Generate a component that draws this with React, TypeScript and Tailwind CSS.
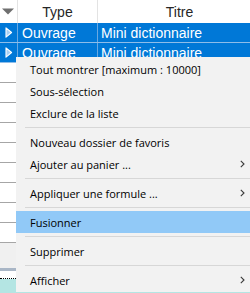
import React from "react";

type Item = { label?: string; sep?: boolean; sub?: boolean; active?: boolean };

const items: Item[] = [
  { label: "Tout montrer [maximum : 10000]" },
  { label: "Sous-sélection" },
  { label: "Exclure de la liste" },
  { sep: true },
  { label: "Nouveau dossier de favoris" },
  { label: "Ajouter au panier ...", sub: true },
  { sep: true },
  { label: "Appliquer une formule ...", sub: true },
  { sep: true },
  { label: "Fusionner", active: true },
  { sep: true },
  { label: "Supprimer" },
  { sep: true },
  { label: "Afficher", sub: true },
];

function Chevron() {
  return (
    <svg width="5" height="8" viewBox="0 0 5 8" className="shrink-0">
      <path d="M0.8 0.8 L4 4 L0.8 7.2" fill="none" stroke="#3a3a3a" strokeWidth="1.1" />
    </svg>
  );
}

function RowArrow() {
  return (
    <svg width="8" height="11" viewBox="0 0 8 11">
      <path d="M1 0.8 L1 10.2 L6.6 5.5 Z" fill="#a9d0f3" stroke="#ffffff" strokeWidth="1.1" strokeLinejoin="round" />
    </svg>
  );
}

function BlueRow() {
  return (
    <div className="flex h-[20px] bg-[#0078d7] border-b border-[#8fbde9] text-white text-[14px] leading-none">
      <div className="w-[18px] shrink-0 border-r border-[#6aa9e2] flex items-center pl-[5px]">
        <RowArrow />
      </div>
      <div className="w-[80px] shrink-0 border-r border-[#6aa9e2] flex items-center pl-[4px]">Ouvrage</div>
      <div className="w-[163px] shrink-0 flex items-center pl-[3px] whitespace-nowrap">Mini dictionnaire</div>
    </div>
  );
}

export default function App() {
  return (
    <div className="relative w-[250px] h-[293px] overflow-hidden bg-white font-['Liberation_Sans',Arial,sans-serif]">
      {/* header */}
      <div className="flex h-[23px] bg-white text-[#262626] text-[14px] leading-none">
        <div className="w-[18px] shrink-0 border-r border-[#e3e3e3] flex items-center justify-center pr-[1px]">
          <svg width="12" height="7" viewBox="0 0 12 7">
            <path d="M0 0.5 L12 0.5 L6 6.5 Z" fill="#6f6f6f" />
          </svg>
        </div>
        <div className="w-[80px] shrink-0 border-r border-[#e3e3e3] flex items-center justify-center">Type</div>
        <div className="w-[163px] shrink-0 flex items-center justify-center">Titre</div>
      </div>
      <BlueRow />
      <BlueRow />
      {Array.from({ length: 9 }).map((_, i) => (
        <div key={i} className="h-[20px] bg-white border-b border-[#a6a6a6]" />
      ))}
      <div className="h-[25px] bg-[#f0f0f0]" />
      <div className="h-[3px] bg-[#a9b6c6]" />
      <div className="h-[7px] bg-white" />
      <div className="h-px border-t border-dotted border-black" />
      <div className="h-[20px] bg-[#b4e5e3]" />

      {/* context menu */}
      <div className="absolute left-[16px] top-[57px] w-[240px] h-[235px] bg-[#f2f2f2] pt-px text-[11px] text-black leading-none font-['Open_Sans',sans-serif]">
        {items.map((it, i) =>
          it.sep ? (
            <div key={i} className="h-[7px] flex items-center pl-[9px]">
              <div className="h-px flex-1 bg-[#d7d7d7]" />
            </div>
          ) : (
            <div
              key={i}
              className={`h-[22px] flex items-center justify-between pl-[14px] pr-[11px] whitespace-nowrap ${
                it.active ? "bg-[#91c9f7]" : ""
              }`}
            >
              <span>{it.label}</span>
              {it.sub ? <Chevron /> : null}
            </div>
          )
        )}
      </div>
    </div>
  );
}
